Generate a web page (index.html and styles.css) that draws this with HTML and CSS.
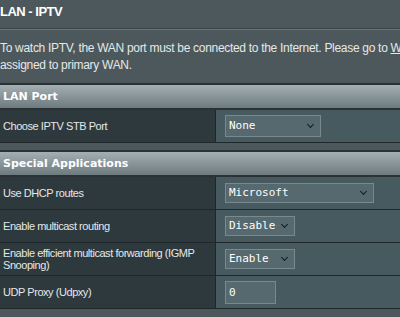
FILE: index.html
```html
<!DOCTYPE html>
<html lang="en">
<head>
    <meta charset="UTF-8">
    <meta name="viewport" content="width=device-width, initial-scale=1.0">
    <title>LAN - IPTV</title>
    <link rel="stylesheet" href="styles.css">
</head>
<body>
    <div class="page">
        <div class="page-title">LAN - IPTV</div>
        <div class="page-desc">
            To watch IPTV, the WAN port must be connected to the Internet. Please go to <a href="#">WAN &gt; Dual WAN</a> to confirm that WAN port is<br>
            assigned to primary WAN.
        </div>

        <table class="form-table">
            <thead>
                <tr><th colspan="2">LAN Port</th></tr>
            </thead>
            <tbody>
                <tr>
                    <th>Choose IPTV STB Port</th>
                    <td><div class="select select-wide">None</div></td>
                </tr>
            </tbody>
        </table>

        <table class="form-table">
            <thead>
                <tr><th colspan="2">Special Applications</th></tr>
            </thead>
            <tbody>
                <tr>
                    <th>Use DHCP routes</th>
                    <td><div class="select select-long">Microsoft</div></td>
                </tr>
                <tr>
                    <th>Enable multicast routing</th>
                    <td><div class="select select-short">Disable</div></td>
                </tr>
                <tr>
                    <th>Enable efficient multicast forwarding (IGMP Snooping)</th>
                    <td><div class="select select-short">Enable</div></td>
                </tr>
                <tr>
                    <th>UDP Proxy (Udpxy)</th>
                    <td><input type="text" class="input-box" value="0"></td>
                </tr>
            </tbody>
        </table>
    </div>
</body>
</html>
```

FILE: styles.css
```css
body {
    margin: 0;
    background-color: #4d585c;
    font-family: "Liberation Sans", Arial, sans-serif;
    color: #e4e8e9;
    overflow: hidden;
}

.page {
    width: 760px;
}

.page-title {
    height: 16px;
    padding: 4px 0 8px 0;
    font-size: 13px;
    font-weight: bold;
    line-height: 16px;
    letter-spacing: -0.5px;
    color: #ffffff;
    border-bottom: 1px solid #3b4448;
}

.page-desc {
    padding: 10px 0 9px 0;
    border-top: 1px solid #68757a;
    font-size: 12px;
    line-height: 17px;
    letter-spacing: -0.3px;
    white-space: nowrap;
}

.page-desc a {
    color: #e4e8e9;
    text-decoration: underline;
}

.form-table {
    width: 100%;
    border-collapse: collapse;
    border-top: 2px solid #2a3236;
    margin-bottom: 7px;
}

.form-table thead th {
    height: 23px;
    padding: 0 0 0 3px;
    text-align: left;
    font-family: "DejaVu Sans", Verdana, sans-serif;
    font-size: 11px;
    font-weight: bold;
    color: #ffffff;
    background: linear-gradient(#a3afb3, #6d7a7e);
    border-bottom: 2px solid #2a3236;
}

.form-table tbody th {
    width: 212px;
    height: 32px;
    padding: 0 0 0 3px;
    text-align: left;
    font-size: 11px;
    font-weight: normal;
    line-height: 12px;
    letter-spacing: -0.45px;
    background-color: #2e393d;
    border-right: 1px solid #1f272a;
    border-bottom: 1px solid #1f272a;
}

.form-table td {
    height: 32px;
    padding: 0 0 0 9px;
    background-color: #475a5f;
    border-bottom: 1px solid #1f272a;
}

.select {
    position: relative;
    box-sizing: border-box;
    height: 22px;
    padding-left: 3px;
    font-family: "DejaVu Sans Mono", monospace;
    font-size: 11px;
    line-height: 20px;
    color: #ffffff;
    background-color: #56696e;
    border: 1px solid #7a898d;
}

.select::after {
    content: "";
    position: absolute;
    right: 7px;
    top: 6px;
    width: 4px;
    height: 4px;
    border-right: 1.5px solid #161b1d;
    border-bottom: 1.5px solid #161b1d;
    transform: rotate(45deg);
}

.select-wide {
    width: 96px;
}

.select-long {
    width: 149px;
    height: 20px;
    line-height: 18px;
}

.select-short {
    width: 70px;
    height: 20px;
    line-height: 18px;
}

.select-long::after,
.select-short::after {
    top: 5px;
}

.input-box {
    box-sizing: border-box;
    width: 51px;
    height: 23px;
    margin: 0;
    padding: 0 0 0 3px;
    font-family: "DejaVu Sans Mono", monospace;
    font-size: 11px;
    color: #ffffff;
    background-color: #56696e;
    border: 1px solid #7a898d;
    display: block;
}
```
